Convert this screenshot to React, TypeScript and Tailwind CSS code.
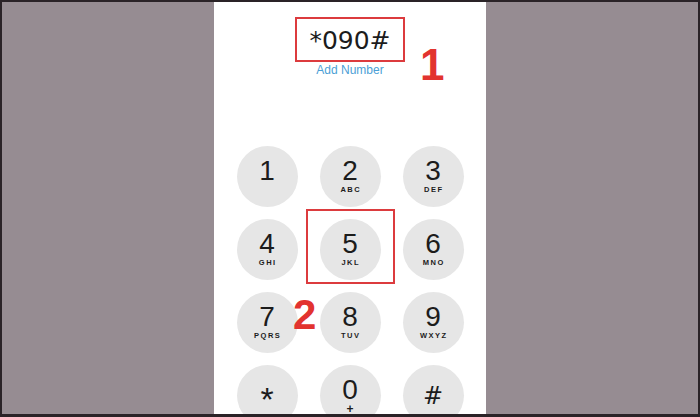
import React from "react";

const keys: { d: string; l: string }[] = [
  { d: "1", l: "" },
  { d: "2", l: "ABC" },
  { d: "3", l: "DEF" },
  { d: "4", l: "GHI" },
  { d: "5", l: "JKL" },
  { d: "6", l: "MNO" },
  { d: "7", l: "PQRS" },
  { d: "8", l: "TUV" },
  { d: "9", l: "WXYZ" },
  { d: "*", l: "" },
  { d: "0", l: "+" },
  { d: "#", l: "" },
];

export default function App() {
  return (
    <div className="w-[700px] h-[417px] bg-[#968c92] border-t-2 border-b-[3px] border-x-2 border-[#2a2327] flex justify-center overflow-hidden">
      <div className="relative w-[272px] h-full bg-white flex flex-col items-center overflow-hidden font-['Liberation_Sans',sans-serif] text-[#1c1c1c]">
        <div className="shrink-0 mt-[15px] w-[110px] h-[45px] border-2 border-[#dc3b3e] flex items-center justify-center text-[25px] leading-none pt-[1px] font-['DejaVu_Sans',sans-serif]">
          *090#
        </div>
        <div className="shrink-0 h-[14px] text-[12px] leading-[14px] mt-[1px] text-[#4b9fd6]">
          Add Number
        </div>
        <div className="shrink-0 mt-[69px] grid grid-cols-[61px_61px_61px] gap-x-[22px] gap-y-[12px]">
          {keys.map((k) => (
            <div
              key={k.d}
              className="w-[61px] h-[61px] rounded-full bg-[#e6e6e6] flex flex-col items-center justify-center"
            >
              {k.d === "*" ? (
                <span className="text-[34px] leading-[30px] pt-[6px]">*</span>
              ) : k.d === "#" ? (
                <span className="text-[24px] leading-[24px] font-['DejaVu_Sans',sans-serif]">#</span>
              ) : (
                <>
                  <span className="text-[28px] leading-[24px]">{k.d}</span>
                  {k.d === "0" ? (
                    <span className="text-[12px] leading-[8px] mt-[3px] font-bold">+</span>
                  ) : (
                    <span
                      className={
                        "text-[7.5px] leading-[8px] mt-[3px] font-bold tracking-[1.5px] pl-[1.5px] " +
                        (k.l === "" ? "invisible" : "")
                      }
                    >
                      {k.l === "" ? "X" : k.l}
                    </span>
                  )}
                </>
              )}
            </div>
          ))}
        </div>
        {/* annotations */}
        <div className="absolute left-[206px] top-[41px] text-[44px] leading-none font-bold text-[#e2332f]">
          1
        </div>
        <div className="absolute left-[92px] top-[207px] w-[89px] h-[75px] border-2 border-[#dc3b3e]"></div>
        <div className="absolute left-[79px] top-[292px] text-[42px] leading-none font-bold text-[#e2332f]">
          2
        </div>
      </div>
    </div>
  );
}
